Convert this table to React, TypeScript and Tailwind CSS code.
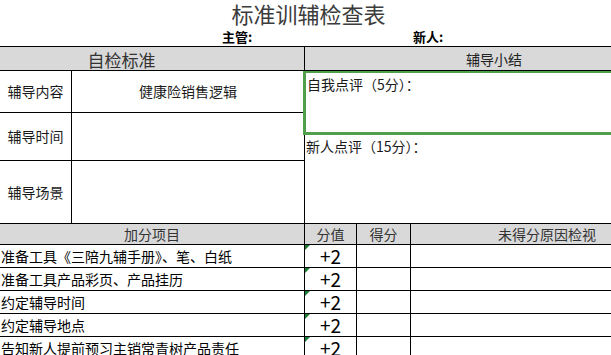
import React from "react";

const items = [
  "准备工具《三陪九辅手册》、笔、白纸",
  "准备工具产品彩页、产品挂历",
  "约定辅导时间",
  "约定辅导地点",
  "告知新人提前预习主销常青树产品责任",
];

export default function App() {
  return (
    <div
      className="w-[611px] h-[355px] overflow-hidden bg-white text-[#1a1a1a]"
      style={{ fontFamily: '"Noto Sans CJK SC", "Noto Sans", sans-serif' }}
    >
      {/* Title */}
      <div className="h-[29px] pl-[6px] text-center text-[22px] leading-[26px] text-[#3c3c3c]">
        标准训辅检查表
      </div>
      <div className="h-[17px] grid grid-cols-[222px_191px_1fr] text-[13px] leading-[16px] font-bold text-black">
        <div />
        <div>主管:</div>
        <div>新人:</div>
      </div>

      {/* Top table */}
      <div className="border-t border-black">
        <div className="grid grid-cols-[305px_1fr] h-[24px] bg-[#d9d9d9] border-b border-black">
          <div className="flex items-center justify-center pr-[61px] text-[17px] text-[#333] border-r border-black">
            自检标准
          </div>
          <div className="flex items-center justify-center pl-[72px] text-[14px] text-[#222]">
            辅导小结
          </div>
        </div>
        <div className="grid grid-cols-[305px_1fr] h-[152px] overflow-hidden">
          <div className="border-r border-black grid grid-rows-[42px_48px_62px] text-[14px]">
            <div className="grid grid-cols-[72px_1fr] border-b border-black">
              <div className="flex items-center justify-center border-r border-black">辅导内容</div>
              <div className="flex items-center justify-center">健康险销售逻辑</div>
            </div>
            <div className="grid grid-cols-[72px_1fr] border-b border-black">
              <div className="flex items-center justify-center border-r border-black">辅导时间</div>
              <div />
            </div>
            <div className="grid grid-cols-[72px_1fr]">
              <div className="flex items-center justify-center border-r border-black">辅导场景</div>
              <div />
            </div>
          </div>
          <div className="flex flex-col -ml-[2px] -mt-[1px] w-[330px] text-[14px]">
            <div className="h-[65px] border-[3px] border-[#4f9f4c] px-[1px] pt-[2px] leading-[18px]">
              自我点评（5分）：
            </div>
            <div className="px-[3px] pt-[2px] leading-[18px]">新人点评（15分）：</div>
          </div>
        </div>
      </div>

      {/* Bottom table */}
      <div className="border-t border-black">
        <div className="grid grid-cols-[305px_52px_54px_1fr] h-[21px] bg-[#d9d9d9] border-b border-black text-[14px] text-[#333]">
          <div className="flex items-center justify-center border-r border-black">加分项目</div>
          <div className="flex items-center justify-center border-r border-black">分值</div>
          <div className="flex items-center justify-center border-r border-black">得分</div>
          <div className="flex items-center justify-center pl-[72px]">未得分原因检视</div>
        </div>
        {items.map((t) => (
          <div
            key={t}
            className="grid grid-cols-[305px_52px_54px_1fr] h-[23px] border-b border-black text-[14px]"
          >
            <div className="flex items-center pl-[1px] border-r border-black whitespace-nowrap text-black">{t}</div>
            <div className="relative flex items-center justify-center border-r border-black text-[19px] leading-[20px] text-black">
              <span className="absolute top-0 left-0 w-0 h-0 border-t-[5px] border-r-[5px] border-t-[#1f7a33] border-r-transparent" />
              +2
            </div>
            <div className="border-r border-black" />
            <div />
          </div>
        ))}
      </div>
    </div>
  );
}
